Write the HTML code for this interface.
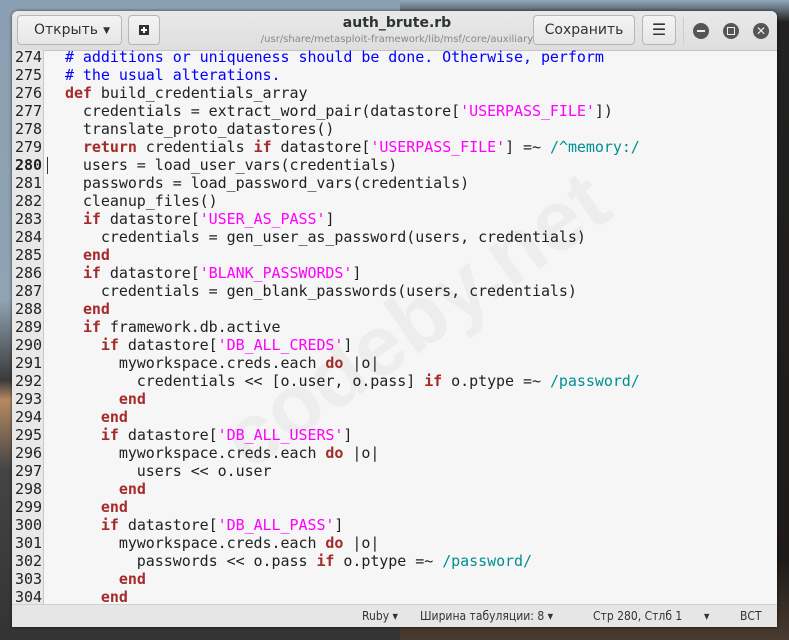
<!DOCTYPE html>
<html><head><meta charset="utf-8"><style>
body{margin:0;width:789px;height:640px;overflow:hidden;position:relative;font-family:"DejaVu Sans","Liberation Sans",sans-serif;
background:linear-gradient(90deg,#6f8595 0,#7d8e9a 12px,#222 12px);}
.bgl{position:absolute;left:0;top:0;width:400px;height:640px;background:linear-gradient(180deg,#8aa0b2 0,#8fa3b3 300px,#3a3a3a 380px,#b58a62 400px,#444 470px,#333 640px)}
.bgr{position:absolute;left:400px;top:0;width:389px;height:640px;background:linear-gradient(180deg,#91a8bb 0,#222 22px,#1e1b19 560px,#4a3a30 640px)}
.win{position:absolute;left:12px;top:11px;width:765px;height:616px;background:#f6f6f6;border-radius:6px 6px 0 0;overflow:hidden;box-shadow:0 0 3px rgba(0,0,0,.6)}
.hdr{position:absolute;left:0;top:0;width:765px;height:39px;background:linear-gradient(#e9e9e9,#dedede);border-bottom:1px solid #c4c4c4}
.btn{position:absolute;top:4px;height:30px;border:1px solid #b6b6b6;border-radius:4px;background:linear-gradient(#f4f4f4,#e6e6e6);box-sizing:border-box;font-size:14px;color:#2e3436;line-height:28px;text-align:center}
.title{position:absolute;left:240px;width:290px;text-align:center;top:4px;font-size:14px;font-weight:bold;color:#2e3436}
.sub{position:absolute;left:230px;width:310px;text-align:center;top:23px;font-size:10px;color:#888;white-space:nowrap}
.circ{position:absolute;top:12px;width:16px;height:16px;border-radius:50%;background:#555}
.gut{position:absolute;left:0;top:39px;width:31px;height:554px;background:#e8e8e8;border-right:1px solid #c8c8c8}
.code{position:absolute;top:37px;font-family:"DejaVu Sans Mono","Liberation Mono",monospace;font-size:15px;line-height:18px;white-space:pre;color:#222;margin:0;letter-spacing:-0.05px}
.ln{left:0;width:30px;text-align:right}
.src{left:35px}
.k{color:#a52a2a;font-weight:bold}.s{color:#f0f}.r{color:#009090}.c{color:#00f}
.sb{position:absolute;left:0;top:593px;width:765px;height:23px;background:#e6e6e6;border-top:1px solid #d0d0d0;font-size:12px;color:#2e3436;line-height:22px}
.sb span{position:absolute;transform:scaleX(.9);transform-origin:left}
.wm{position:absolute;left:180px;top:260px;font-size:86px;font-weight:bold;color:rgba(0,0,0,.035);transform:rotate(-35deg);font-family:"Liberation Sans",sans-serif}
</style></head><body>
<div class="bgl"></div><div class="bgr"></div>
<div class="win">
<div class="hdr">
<div class="btn" style="left:5px;width:105px;text-align:left;padding-left:16px">Открыть<span style="font-size:9px;position:absolute;right:11px;top:1px">▼</span></div>
<div class="btn" style="left:116px;width:32px"><svg width="14" height="12" viewBox="0 0 14 12" style="margin-top:8px"><path d="M2 1h10v10H2z" fill="#2e3436"/><path d="M7 3v6M4 6h6" stroke="#fff" stroke-width="2"/></svg></div>
<div class="title">auth_brute.rb</div>
<div class="sub">/usr/share/metasploit-framework/lib/msf/core/auxiliary</div>
<div class="btn" style="left:521px;width:102px">Сохранить</div>
<div class="btn" style="left:630px;width:34px;font-size:16px">☰</div>
<div style="position:absolute;left:671px;top:6px;width:1px;height:28px;background:#ccc"></div>
<div class="circ" style="left:681px"><div style="position:absolute;left:4px;top:7px;width:8px;height:2px;background:#eee"></div></div>
<div class="circ" style="left:711px"><div style="position:absolute;left:4px;top:4px;width:6px;height:6px;border:1px solid #eee"></div></div>
<div class="circ" style="left:741px;color:#eee;font-size:12px;line-height:16px;text-align:center">✕</div>
</div>
<div class="gut"></div>
<pre class="code ln">274
275
276
277
278
279
<b>280</b>
281
282
283
284
285
286
287
288
289
290
291
292
293
294
295
296
297
298
299
300
301
302
303
304</pre>
<div style="position:absolute;left:35px;top:146px;width:1px;height:17px;background:#333"></div>
<div class="wm">codeby.net</div>
<pre class="code src">  <span class="c"># additions or uniqueness should be done. Otherwise, perform</span>
  <span class="c"># the usual alterations.</span>
  <span class="k">def</span> build_credentials_array
    credentials = extract_word_pair(datastore[<span class="s">'USERPASS_FILE'</span>])
    translate_proto_datastores()
    <span class="k">return</span> credentials <span class="k">if</span> datastore[<span class="s">'USERPASS_FILE'</span>] =~ <span class="r">/^memory:/</span>
    users = load_user_vars(credentials)
    passwords = load_password_vars(credentials)
    cleanup_files()
    <span class="k">if</span> datastore[<span class="s">'USER_AS_PASS'</span>]
      credentials = gen_user_as_password(users, credentials)
    <span class="k">end</span>
    <span class="k">if</span> datastore[<span class="s">'BLANK_PASSWORDS'</span>]
      credentials = gen_blank_passwords(users, credentials)
    <span class="k">end</span>
    <span class="k">if</span> framework.db.active
      <span class="k">if</span> datastore[<span class="s">'DB_ALL_CREDS'</span>]
        myworkspace.creds.each <span class="k">do</span> |o|
          credentials &lt;&lt; [o.user, o.pass] <span class="k">if</span> o.ptype =~ <span class="r">/password/</span>
        <span class="k">end</span>
      <span class="k">end</span>
      <span class="k">if</span> datastore[<span class="s">'DB_ALL_USERS'</span>]
        myworkspace.creds.each <span class="k">do</span> |o|
          users &lt;&lt; o.user
        <span class="k">end</span>
      <span class="k">end</span>
      <span class="k">if</span> datastore[<span class="s">'DB_ALL_PASS'</span>]
        myworkspace.creds.each <span class="k">do</span> |o|
          passwords &lt;&lt; o.pass <span class="k">if</span> o.ptype =~ <span class="r">/password/</span>
        <span class="k">end</span>
      <span class="k">end</span></pre>
<div class="sb">
<span style="left:350px">Ruby ▾</span>
<span style="left:408px">Ширина табуляции: 8 ▾</span>
<span style="left:581px">Стр 280, Стлб 1</span>
<span style="left:692px">▾</span>
<span style="left:728px">ВСТ</span>
</div>
</div>
</body></html>
